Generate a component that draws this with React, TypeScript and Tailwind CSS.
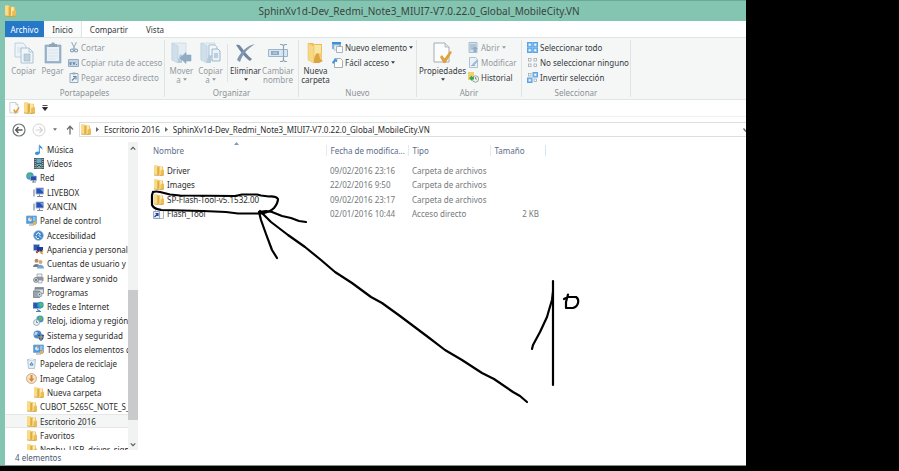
import type { ReactNode } from "react";

type TreeEntry = { name: string; icon: ReactNode; level: 1 | 2; selected?: boolean };

type FileEntry = { name: string; date: string; kind: string; size: string; shortcut?: boolean };

const folderTitle = "SphinXv1d-Dev_Redmi_Note3_MIUI7-V7.0.22.0_Global_MobileCity.VN";

function FolderIcon({ className = "h-[11px] w-[10px]" }: { className?: string }) {
  return (
    <svg viewBox="0 0 20 22" className={className} aria-hidden="true">
      <path d="M0 1h7l2 2h9v17H0z" fill="#efc765" />
      <path d="M0 1h6v19H0z" fill="#f9dc8a" />
      <path d="M10 4h6v15h-6z" fill="#fbe9b0" />
      <path d="M7 5l4-3v16l-4 3z" fill="#e2ab3d" />
      <path d="M13 11l7-2v11l-7 2z" fill="#edbd55" />
      <path d="M0 20l10 1.500 10-1.500" fill="none" stroke="#cf9a37" strokeWidth="1.500" />
    </svg>
  );
}

function BigFolderIcon() {
  return (
    <svg viewBox="0 0 18 22" className="h-[22px] w-[18px]" aria-hidden="true">
      <path d="M1 1h5l1 1h8v16H1z" fill="#eabf58" />
      <path d="M7 3h7v15H7z" fill="#fae5a2" />
      <path d="M1 1l6 3v17l-6-3z" fill="#f7d983" stroke="#e4b650" strokeWidth=".5" />
      <path d="M7 17c1-4 2-5 3-6l2 1c1 3 1 5 4 7l-4 2H7z" fill="#dca343" />
      <path d="M12 11h3v7l-2-1z" fill="#f2cc72" />
    </svg>
  );
}

function PaleFolderIcon({ copy }: { copy?: boolean }) {
  return (
    <svg viewBox="0 0 21 22" className="h-[22px] w-[21px]" aria-hidden="true">
      <path d="M1 1h14v17H1z" fill="#e4edf3" stroke="#c3d5e0" strokeWidth=".6" />
      <path d="M1 1l6 3v17l-6-3z" fill="#d0e0ea" stroke="#b8cddb" strokeWidth=".6" />
      <path d="M7 18l2-6 2 1v8H7z" fill="#b4cbdb" />
      {copy ? (
        <>
          <path d="M9 3h6l2 2v9H9z" fill="#f3f8fb" stroke="#a9c1d2" />
          <path d="M12 7h6l2 2v10h-8z" fill="#eaf2f7" stroke="#9cb7cb" />
          <path d="M14 11h4v5h-4z" fill="#b9cfdf" />
        </>
      ) : (
        <path d="M20 13v6h-5v2.500l-6-5.500 6-5.500V13z" fill="#91adc6" stroke="#829fb9" strokeWidth=".5" />
      )}
    </svg>
  );
}

function CopyIcon() {
  return (
    <svg viewBox="0 0 20 22" className="h-[22px] w-[20px]" aria-hidden="true">
      <path d="M1 1h8l3 3v11H1z" fill="#edf3f7" stroke="#b4c8d6" strokeWidth=".8" />
      <path d="M3 6h6M3 8h6M3 10h4" stroke="#c7d8e3" strokeWidth=".7" />
      <path d="M7 6h8l4 4v11H7z" fill="#f0f5f9" stroke="#a6bdce" strokeWidth=".9" />
      <path d="M15 6v4h4" fill="none" stroke="#a6bdce" strokeWidth=".8" />
      <path d="M10 12h6v7h-6z" fill="#bdd1df" stroke="#9ab3c7" strokeWidth=".6" />
    </svg>
  );
}

function PasteIcon() {
  return (
    <svg viewBox="0 0 18 22" className="h-[22px] w-[18px]" aria-hidden="true">
      <path d="M1 3h16v18H1z" fill="#9db7ce" stroke="#87a2bb" strokeWidth=".6" />
      <path d="M3 5h12v14H3z" fill="#e9f0f6" />
      <path d="M4 8h10M4 11h10M4 14h10M4 17h7" stroke="#d5e2ec" strokeWidth=".7" />
      <path d="M5 2h2l1-1.500h2L11 2h2v3H5z" fill="#8fa6ba" />
    </svg>
  );
}

function DeleteIcon() {
  return (
    <svg viewBox="0 0 21 20" className="h-[22px] w-[21px]" aria-hidden="true">
      <path d="M1 2c3-1 4 0 6 3 3 4 5 7 10 11l-2 2C9 14 6 9 1 2z" fill="#71869f" />
      <path d="M20 1C13 2 5 9 2 17l3 2C7 12 12 6 20 1z" fill="#8196b1" />
    </svg>
  );
}

function RenameIcon() {
  return (
    <svg viewBox="0 0 20 20" className="h-[22px] w-[20px]" aria-hidden="true">
      <path d="M.5 6.500h19v7H.5z" fill="#dbe7f0" stroke="#9db5ca" />
      <path d="M3 8h8v4H3z" fill="#8eabc6" />
      <path d="M5 10h4" stroke="#c9dae8" />
      <path d="M12 1.500h2l1.500 1 1.500-1h2M15.500 2v16M12 18.500h2l1.500-1 1.500 1h2" fill="none" stroke="#8ca5bc" strokeWidth="1.200" />
    </svg>
  );
}

function PropertiesIcon({ className = "h-[22px] w-[19px]" }: { className?: string }) {
  return (
    <svg viewBox="0 0 19 22" className={className} aria-hidden="true">
      <path d="M1 1h11l4 4v15H1z" fill="#fbfcfc" stroke="#a5acb1" />
      <path d="M12 1v4h4" fill="#e4e8ea" stroke="#a5acb1" strokeWidth=".8" />
      <path d="M7 15l2-2 2.500 3.500L17 9l2 1-6.500 11h-2z" fill="#e0a03c" />
    </svg>
  );
}

function ScissorsIcon() {
  return (
    <svg viewBox="0 0 10 11" className="h-[11px] w-[10px]" aria-hidden="true">
      <path d="M2.500 0l3.500 7M7.500 0L4 7" stroke="#9fb2c3" strokeWidth="1.100" />
      <circle cx="3" cy="8.500" r="1.500" fill="none" stroke="#7f9ab4" strokeWidth="1.100" />
      <circle cx="7" cy="8.500" r="1.500" fill="none" stroke="#7f9ab4" strokeWidth="1.100" />
    </svg>
  );
}

function PathIcon() {
  return (
    <svg viewBox="0 0 11 10" className="h-[10px] w-[11px]" aria-hidden="true">
      <path d="M.5 1.500h10v7H.5z" fill="#c3d5e3" stroke="#94adc3" />
      <path d="M2 4v2.500h1V4M5 4l1 2.500L7 4M8 6.500h1" fill="none" stroke="#5f7e9e" strokeWidth=".9" />
    </svg>
  );
}

function PasteLinkIcon() {
  return (
    <svg viewBox="0 0 10 11" className="h-[11px] w-[10px]" aria-hidden="true">
      <path d="M1 1.500h8v9H1z" fill="#eef3f7" stroke="#93a9bc" />
      <path d="M3.500.5h3v2h-3z" fill="#93a9bc" />
      <path d="M3 8.500l3-3M4 4.500h3v3" fill="none" stroke="#6484a2" strokeWidth="1.100" />
    </svg>
  );
}

function NewItemIcon() {
  return (
    <svg viewBox="0 0 11 11" className="h-[11px] w-[11px]" aria-hidden="true">
      <path d="M0 0h9v7H0z" fill="#7fb2dd" />
      <path d="M0 0h9v2H0z" fill="#3d8fd6" />
      <path d="M2 3h5v5H2z" fill="#e6f1fa" stroke="#9bb0c0" strokeWidth=".6" />
      <path d="M4.500 4.500h6v6h-6z" fill="#f8fafb" stroke="#96a5b0" strokeWidth=".8" />
    </svg>
  );
}

function EasyAccessIcon() {
  return (
    <svg viewBox="0 0 11 11" className="h-[11px] w-[11px]" aria-hidden="true">
      <path d="M2.500 1.500h6l2 2v7h-8z" fill="#fcfdfd" stroke="#a3adb4" />
      <path d="M0 5l3-3 2.500.5L5 5 3.500 4.500 1 7z" fill="#3c93d8" />
    </svg>
  );
}

function OpenIcon() {
  return (
    <svg viewBox="0 0 11 11" className="h-[11px] w-[11px]" aria-hidden="true">
      <path d="M1 .5h8v10H1z" fill="#d3e1ec" stroke="#9bb3c7" strokeWidth=".8" />
      <path d="M2 3h6M2 5h4M2 7h3" stroke="#88a5bf" strokeWidth=".9" />
      <path d="M7 4l3 3H8.500v3h-3V7H4z" fill="#8facc7" />
    </svg>
  );
}

function EditIcon() {
  return (
    <svg viewBox="0 0 11 11" className="h-[11px] w-[11px]" aria-hidden="true">
      <path d="M1.500.5h6l2 2v8h-8z" fill="#eaf2f8" stroke="#9fb5c8" strokeWidth=".8" />
      <path d="M4 9l.5-2L9 2.500l1.500 1.500L6 8.500z" fill="#9bbbd6" />
      <path d="M3 8.500h4" stroke="#89a6c1" strokeWidth=".8" />
    </svg>
  );
}

function HistoryIcon() {
  return (
    <svg viewBox="0 0 11 11" className="h-[11px] w-[11px]" aria-hidden="true">
      <path d="M0 0h6v8H0z" fill="#efd06b" />
      <circle cx="7.500" cy="7" r="3.200" fill="#eef2ee" stroke="#86928b" strokeWidth=".8" />
      <path d="M7.500 5v2h1.500" fill="none" stroke="#657069" strokeWidth=".7" />
      <path d="M1 6l3-2.500V5h2v2.500H4V9z" fill="#39a84c" />
    </svg>
  );
}

// one cell for each of the four tiles, true when the tile is picked
function TilesIcon({ tiles }: { tiles: boolean[] }) {
  return (
    <svg viewBox="0 0 11 11" className="h-[11px] w-[11px]" aria-hidden="true">
      {tiles.map((on, i) => {
        const x = (i % 2) * 5.5;
        const y = Math.floor(i / 2) * 5.5;
        return (
          <g key={i}>
            {on && <rect x={x} y={y} width="5.500" height="5.500" fill="#5aa5e8" />}
            <rect x={x + 1.5} y={y + 1.5} width="2.500" height="2.500" fill="#fff" stroke={on ? "#8cc2f0" : "#a3a9ad"} strokeWidth=".8" />
          </g>
        );
      })}
    </svg>
  );
}

function MusicIcon() {
  return (
    <svg viewBox="0 0 10 11" className="h-[11px] w-[10px]" aria-hidden="true">
      <path d="M5 0c.5 2 4 2.500 3.500 6-.5-1.500-1.500-2-2.500-2v4.500C6 10 4.500 11 3 11S.8 10 1 9s2-2 4-1.300z" fill="#3b92d8" />
      <path d="M5 1v6.500" stroke="#8fc6ef" strokeWidth=".8" />
    </svg>
  );
}

function VideoIcon() {
  return (
    <svg viewBox="0 0 10 11" className="h-[11px] w-[10px]" aria-hidden="true">
      <path d="M0 0h10v11H0z" fill="#46565f" />
      <path d="M2.500.5h5v4.500h-5z" fill="#69a8c7" />
      <path d="M2.500 6h5v4.500h-5z" fill="#7fb3a3" />
      <path d="M1.200 1v9.500M8.800 1v9.500" stroke="#c5d0d6" strokeDasharray="1 1" />
      <path d="M3 9l2-2 2 2" fill="none" stroke="#304a66" />
    </svg>
  );
}

function NetworkIcon() {
  return (
    <svg viewBox="0 0 11 11" className="h-[11px] w-[11px]" aria-hidden="true">
      <circle cx="4" cy="4" r="3.800" fill="#3f9ed5" />
      <path d="M1 3l2-2 2 1-1 2-2 2z" fill="#58b956" />
      <path d="M4.500 4h6v4.500h-6z" fill="#244fae" stroke="#a9b7c8" strokeWidth=".7" />
      <path d="M6 10h4M7.500 8.500V10" stroke="#6f7d8c" />
    </svg>
  );
}

function ComputerIcon() {
  return (
    <svg viewBox="0 0 11 11" className="h-[11px] w-[11px]" aria-hidden="true">
      <path d="M0 2.500h2v7H0z" fill="#b0b9c3" />
      <path d="M3 1h7.500v6H3z" fill="#2451bd" stroke="#aab4c2" strokeWidth=".9" />
      <path d="M7 2l3 0v3z" fill="#6f9fe4" />
      <path d="M6.500 7.500V9M4 9.500h6" stroke="#7b8793" />
    </svg>
  );
}

function ControlPanelIcon() {
  return (
    <svg viewBox="0 0 11 11" className="h-[11px] w-[11px]" aria-hidden="true">
      <path d="M.5 1h10v7.500H.5z" fill="#4c9ade" stroke="#7da8ca" strokeWidth=".8" />
      <circle cx="4" cy="4.500" r="2" fill="#d5e9f8" />
      <path d="M4 4.500V2.500a2 2 0 012 2z" fill="#f08c3c" />
      <path d="M7 3h2.500M7 5h2.500" stroke="#fff" strokeWidth=".8" />
      <path d="M3 10h5" stroke="#8997a5" />
      <path d="M7 7l3-1v4H7z" fill="#e5b253" />
    </svg>
  );
}

function AccessIcon() {
  return (
    <svg viewBox="0 0 11 11" className="h-[11px] w-[11px]" aria-hidden="true">
      <circle cx="5.500" cy="5.500" r="4.800" fill="#3b83cd" stroke="#8eb0d2" strokeWidth=".8" />
      <path d="M3 5l2-2.500L7.500 4 6 5.500l2 2M3 6a2.200 2.200 0 003 2.500" fill="none" stroke="#fff" />
    </svg>
  );
}

function AppearanceIcon() {
  return (
    <svg viewBox="0 0 11 11" className="h-[11px] w-[11px]" aria-hidden="true">
      <path d="M.5.5h6v6h-6z" fill="#2858b8" stroke="#b8c2ce" strokeWidth=".6" />
      <path d="M4 3h6v5H4z" fill="#1d3a94" />
      <path d="M6 7l4 3M8 10l2-4" stroke="#d8a748" strokeWidth="1.300" />
      <circle cx="4" cy="8" r="1.300" fill="#cf4b42" />
    </svg>
  );
}

function UsersIcon() {
  return (
    <svg viewBox="0 0 11 11" className="h-[11px] w-[11px]" aria-hidden="true">
      <circle cx="3.500" cy="2.800" r="2" fill="#b98c62" />
      <path d="M0 9c0-4 7-4 7 0z" fill="#717d87" />
      <circle cx="7.500" cy="4" r="2" fill="#d7a877" />
      <path d="M4 10.500c0-5 7-5 7 0z" fill="#6fa8d3" />
    </svg>
  );
}

function PrinterIcon() {
  return (
    <svg viewBox="0 0 11 11" className="h-[11px] w-[11px]" aria-hidden="true">
      <path d="M4 1h5v3H4z" fill="#f0f2f4" stroke="#8c959d" strokeWidth=".7" />
      <path d="M2.500 4H10.500v4h-8z" fill="#8e979f" />
      <circle cx="3" cy="7" r="2.500" fill="#c5cbd0" stroke="#6e7880" strokeWidth=".7" />
      <circle cx="3" cy="7" r=".9" fill="#59636b" />
      <path d="M5.500 7H9v3H5.500z" fill="#edf0f2" stroke="#8c959d" strokeWidth=".6" />
    </svg>
  );
}

function ProgramsIcon() {
  return (
    <svg viewBox="0 0 11 11" className="h-[11px] w-[11px]" aria-hidden="true">
      <path d="M2 .5h8.500v6H2z" fill="#dce1e5" stroke="#7e8992" strokeWidth=".8" />
      <path d="M2 .5h8.500v2H2z" fill="#7e8992" />
      <path d="M.5 4h6v6.500h-6z" fill="#9ba5ad" stroke="#68737c" strokeWidth=".7" />
      <circle cx="6.500" cy="7.500" r="2.500" fill="#c9cfd4" stroke="#77828a" strokeWidth=".6" />
      <circle cx="6.500" cy="7.500" r=".7" fill="#4d6887" />
    </svg>
  );
}

function InternetIcon() {
  return (
    <svg viewBox="0 0 11 11" className="h-[11px] w-[11px]" aria-hidden="true">
      <path d="M0 1.500h8v6H0z" fill="#2559b8" stroke="#a5b4c5" strokeWidth=".6" />
      <circle cx="7.500" cy="4" r="3.200" fill="#349bc7" />
      <path d="M6 3l2-1.500L10 4 8 6z" fill="#61bd5b" />
      <path d="M4 8.500l3 1.500M3 10.500h5" stroke="#3f8aa4" strokeWidth="1.200" />
    </svg>
  );
}

function ClockIcon() {
  return (
    <svg viewBox="0 0 11 11" className="h-[11px] w-[11px]" aria-hidden="true">
      <circle cx="7" cy="4" r="3.600" fill="#3f94cf" />
      <path d="M5 3l2-2 3 2-2 3z" fill="#60b85c" />
      <circle cx="3.500" cy="7.500" r="3" fill="#eaf0f4" stroke="#8699a8" strokeWidth=".8" />
      <path d="M3.500 5.500v2H5" fill="none" stroke="#51616d" strokeWidth=".7" />
    </svg>
  );
}

function SecurityIcon() {
  return (
    <svg viewBox="0 0 11 11" className="h-[11px] w-[11px]" aria-hidden="true">
      <circle cx="4.500" cy="4.500" r="4" fill="#4c88c6" />
      <path d="M2 1.500l3 1-1 2-3 1z" fill="#b7d6ed" />
      <path d="M5 5l3-1 3 1c0 3-1 5-3 6-2-1-3-3-3-6z" fill="#1e58b0" />
      <path d="M8 4v6.500M5 7h6" stroke="#e9ba4b" strokeWidth=".8" />
    </svg>
  );
}

function RecycleIcon() {
  return (
    <svg viewBox="0 0 11 11" className="h-[11px] w-[11px]" aria-hidden="true">
      <path d="M1.500 1.500h8l-1 9h-6z" fill="#e3edf3" stroke="#a7bac6" strokeWidth=".8" />
      <path d="M3.500 1h4l1 1.500h-6z" fill="#fff" stroke="#b7c4cc" strokeWidth=".5" />
      <path d="M4 7l1.500-2.500L7 7z" fill="none" stroke="#3e86c7" />
    </svg>
  );
}

function CatalogIcon() {
  return (
    <svg viewBox="0 0 11 11" className="h-[11px] w-[11px]" aria-hidden="true">
      <circle cx="5.500" cy="5.500" r="4.900" fill="#f7e7d1" stroke="#c99b66" strokeWidth=".9" />
      <path d="M4.500 2h2v3.500h2l-3 3.500-3-3.500h2z" fill="#d48b3c" />
    </svg>
  );
}

function ShortcutIcon() {
  return (
    <svg viewBox="0 0 11 11" className="h-[11px] w-[11px]" aria-hidden="true">
      <path d="M2.500.5h5l3 2.500v7.500h-8z" fill="#f7f8fa" stroke="#99a3ad" strokeWidth=".8" />
      <path d="M.5 3.500h6v7h-6z" fill="#e5ecf7" stroke="#8494ab" strokeWidth=".8" />
      <path d="M1.500 9l3-3M2.500 5.500H5V8" fill="none" stroke="#2444a5" strokeWidth="1.200" />
    </svg>
  );
}

const tree: TreeEntry[] = [
  { name: "Música", icon: <MusicIcon />, level: 2 },
  { name: "Vídeos", icon: <VideoIcon />, level: 2 },
  { name: "Red", icon: <NetworkIcon />, level: 1 },
  { name: "LIVEBOX", icon: <ComputerIcon />, level: 2 },
  { name: "XANCIN", icon: <ComputerIcon />, level: 2 },
  { name: "Panel de control", icon: <ControlPanelIcon />, level: 1 },
  { name: "Accesibilidad", icon: <AccessIcon />, level: 2 },
  { name: "Apariencia y personaliz", icon: <AppearanceIcon />, level: 2 },
  { name: "Cuentas de usuario y p", icon: <UsersIcon />, level: 2 },
  { name: "Hardware y sonido", icon: <PrinterIcon />, level: 2 },
  { name: "Programas", icon: <ProgramsIcon />, level: 2 },
  { name: "Redes e Internet", icon: <InternetIcon />, level: 2 },
  { name: "Reloj, idioma y región", icon: <ClockIcon />, level: 2 },
  { name: "Sistema y seguridad", icon: <SecurityIcon />, level: 2 },
  { name: "Todos los elementos d", icon: <ControlPanelIcon />, level: 2 },
  { name: "Papelera de reciclaje", icon: <RecycleIcon />, level: 1 },
  { name: "Image Catalog", icon: <CatalogIcon />, level: 1 },
  { name: "Nueva carpeta", icon: <FolderIcon />, level: 2 },
  { name: "CUBOT_5265C_NOTE_S_", icon: <FolderIcon />, level: 1 },
  { name: "Escritorio 2016", icon: <FolderIcon />, level: 1, selected: true },
  { name: "Favoritos", icon: <FolderIcon />, level: 1 },
  { name: "Nenhu_USB_driver_signe", icon: <FolderIcon />, level: 1 },
];

const files: FileEntry[] = [
  { name: "Driver", date: "09/02/2016 23:16", kind: "Carpeta de archivos", size: "" },
  { name: "Images", date: "22/02/2016 9:50", kind: "Carpeta de archivos", size: "" },
  { name: "SP-Flash-Tool-v5.1532.00", date: "09/02/2016 23:17", kind: "Carpeta de archivos", size: "" },
  { name: "Flash_Tool", date: "02/01/2016 10:44", kind: "Acceso directo", size: "2 KB", shortcut: true },
];

function Caret() {
  return (
    <svg viewBox="0 0 5 3" className="h-[3px] w-[4px]" aria-hidden="true">
      <path d="M0 0h5L2.500 3z" fill="currentColor" />
    </svg>
  );
}

function RibbonGroup({ label, className, children }: { label: string; className: string; children: ReactNode }) {
  return (
    <section className={`flex shrink-0 flex-col py-[2px] ${className}`}>
      <div className="flex flex-1 flex-col border-r border-[#dfe3e3]">
        <div className="flex flex-1">{children}</div>
        <h2 className="h-[9px] text-center leading-[9px] text-[#8d9193]">{label}</h2>
      </div>
    </section>
  );
}

function BigButton({ icon, lines, className, caret, disabled }: { icon: ReactNode; lines: string[]; className: string; caret?: "below" | "inline"; disabled?: boolean }) {
  return (
    <button type="button" disabled={disabled} className={`flex shrink-0 flex-col items-center pt-[2px] leading-[9px] whitespace-nowrap ${disabled ? "text-[#93999d]" : "text-[#35393d]"} ${className}`}>
      {icon}
      <span className="mt-[2px]">{lines[0]}</span>
      {lines[1] && (
        <span className="flex items-center gap-[2px]">
          {lines[1]}
          {caret === "inline" && <Caret />}
        </span>
      )}
      {caret === "below" && (
        <span className="pt-[3px]">
          <Caret />
        </span>
      )}
    </button>
  );
}

function SmallButton({ icon, label, caret, disabled }: { icon: ReactNode; label: string; caret?: boolean; disabled?: boolean }) {
  return (
    <button type="button" disabled={disabled} className={`flex h-[15px] items-center gap-[2px] whitespace-nowrap ${disabled ? "text-[#93999d]" : "text-[#35393d]"}`}>
      <span className="flex w-[11px] justify-center">{icon}</span>
      {label}
      {caret && <Caret />}
    </button>
  );
}

function Ribbon() {
  return (
    <div className="flex h-[63px] shrink-0 overflow-hidden border-y border-[#dfe4e4] bg-[#f5f7f7]">
      <RibbonGroup label="Portapapeles" className="w-[160px]">
        <BigButton icon={<CopyIcon />} lines={["Copiar"]} className="ml-[4px] w-[29px]" disabled />
        <BigButton icon={<PasteIcon />} lines={["Pegar"]} className="w-[29px]" disabled />
        <div className="pl-[1px]">
          <SmallButton icon={<ScissorsIcon />} label="Cortar" disabled />
          <SmallButton icon={<PathIcon />} label="Copiar ruta de acceso" disabled />
          <SmallButton icon={<PasteLinkIcon />} label="Pegar acceso directo" disabled />
        </div>
      </RibbonGroup>
      <RibbonGroup label="Organizar" className="w-[134px]">
        <BigButton icon={<PaleFolderIcon />} lines={["Mover", "a"]} className="ml-[2px] w-[29px]" caret="inline" disabled />
        <BigButton icon={<PaleFolderIcon copy />} lines={["Copiar", "a"]} className="w-[29px]" caret="inline" disabled />
        <div className="mt-[4px] ml-[2px] h-[38px] border-l border-[#dfe3e3]" />
        <BigButton icon={<DeleteIcon />} lines={["Eliminar"]} className="w-[35px]" caret="below" />
        <BigButton icon={<RenameIcon />} lines={["Cambiar", "nombre"]} className="w-[30px]" disabled />
      </RibbonGroup>
      <RibbonGroup label="Nuevo" className="w-[118px]">
        <BigButton icon={<BigFolderIcon />} lines={["Nueva", "carpeta"]} className="w-[33px]" />
        <div>
          <SmallButton icon={<NewItemIcon />} label="Nuevo elemento" caret />
          <SmallButton icon={<EasyAccessIcon />} label="Fácil acceso" caret />
        </div>
      </RibbonGroup>
      <RibbonGroup label="Abrir" className="w-[105px]">
        <BigButton icon={<PropertiesIcon />} lines={["Propiedades"]} className="w-[51px]" caret="below" />
        <div>
          <SmallButton icon={<OpenIcon />} label="Abrir" caret disabled />
          <SmallButton icon={<EditIcon />} label="Modificar" disabled />
          <SmallButton icon={<HistoryIcon />} label="Historial" />
        </div>
      </RibbonGroup>
      <RibbonGroup label="Seleccionar" className="w-[109px]">
        <div className="pl-[5px]">
          <SmallButton icon={<TilesIcon tiles={[true, true, true, true]} />} label="Seleccionar todo" />
          <SmallButton icon={<TilesIcon tiles={[false, false, false, false]} />} label="No seleccionar ninguno" />
          <SmallButton icon={<TilesIcon tiles={[false, true, true, false]} />} label="Invertir selección" />
        </div>
      </RibbonGroup>
    </div>
  );
}

function AddressBar() {
  return (
    <div className="flex h-[25px] shrink-0 items-center pl-[7px] text-[#2b2b2b]">
      <button type="button" aria-label="Atrás">
        <svg viewBox="0 0 14 14" className="h-[14px] w-[14px]">
          <circle cx="7" cy="7" r="6" fill="#fff" stroke="#73777a" strokeWidth="1.200" />
          <path d="M10.500 7H4M6.500 4L3.700 7l2.800 3" fill="none" stroke="#55595c" strokeWidth="1.400" />
        </svg>
      </button>
      <button type="button" aria-label="Adelante" className="ml-[6px]" disabled>
        <svg viewBox="0 0 14 14" className="h-[14px] w-[14px]">
          <circle cx="7" cy="7" r="6" fill="#fff" stroke="#d2d4d5" />
          <path d="M3.500 7H10M7.500 4l2.800 3-2.800 3" fill="none" stroke="#d2d4d5" strokeWidth="1.200" />
        </svg>
      </button>
      <button type="button" aria-label="Ubicaciones recientes" className="ml-[7px] text-[#6b6e70]">
        <Caret />
      </button>
      <button type="button" aria-label="Subir" className="ml-[9px]">
        <svg viewBox="0 0 8 10" className="h-[10px] w-[8px]">
          <path d="M4 9.500V1.500M1 4.500l3-3.200 3 3.200" fill="none" stroke="#6b6e70" strokeWidth="1.300" />
        </svg>
      </button>
      <nav aria-label="Ruta" className="ml-[5px] flex h-[15px] min-w-0 flex-1 items-center border border-r-0 border-[#dcdfdf]">
        <span className="ml-[1px]">
          <FolderIcon />
        </span>
        <Chevron />
        <button type="button" className="shrink-0">Escritorio 2016</button>
        <Chevron />
        <button type="button" className="min-w-0 truncate">{folderTitle}</button>
        <svg viewBox="0 0 5 4" className="ml-auto h-[4px] w-[3px]" preserveAspectRatio="xMinYMid slice" aria-hidden="true">
          <path d="M.5.5L3 3.500" stroke="#55595c" strokeWidth="1.200" />
        </svg>
      </nav>
    </div>
  );
}

function Chevron() {
  return (
    <svg viewBox="0 0 3 5" className="mx-[5px] h-[5px] w-[3px] shrink-0" aria-hidden="true">
      <path d="M0 0l3 2.500L0 5z" fill="#66696b" />
    </svg>
  );
}

function Sidebar() {
  return (
    <aside className="flex w-[133px] shrink-0">
      <ul className="grid h-[315px] min-w-0 flex-1 auto-rows-fr">
        {tree.map((entry) => (
          <li key={entry.name} className={`min-h-0 overflow-hidden ${entry.selected ? "border-y border-[#e6e8e8] bg-[#f4f6f6]" : ""}`}>
            <button type="button" className={`flex h-full w-full items-center gap-[3px] whitespace-nowrap text-[#2b2b2b] ${entry.level === 1 ? "pl-[21px]" : "pl-[28px]"}`}>
              <span className="flex w-[11px] shrink-0 justify-center">{entry.icon}</span>
              {entry.name}
            </button>
          </li>
        ))}
      </ul>
      <div className="flex h-[308px] w-[10px] shrink-0 flex-col items-center bg-[#f1f2f2]">
        <ScrollArrow label="Subir lista" path="M1 4l3-3 3 3" />
        <div className="mt-[136px] h-[130px] w-full bg-[#c9cacb]" />
        <div className="mt-auto">
          <ScrollArrow label="Bajar lista" path="M1 1l3 3 3-3" />
        </div>
      </div>
    </aside>
  );
}

function ScrollArrow({ label, path }: { label: string; path: string }) {
  return (
    <button type="button" aria-label={label} className="flex h-[12px] items-center">
      <svg viewBox="0 0 8 5" className="h-[5px] w-[6px]">
        <path d={path} fill="none" stroke="#55595c" strokeWidth="1.600" />
      </svg>
    </button>
  );
}

function FileList() {
  return (
    <div className="min-w-0 flex-1 pl-[1px]">
      <div className="flex h-[3px] pl-[95px]">
        <svg viewBox="0 0 5 3" className="h-[3px] w-[5px]" aria-hidden="true">
          <path d="M0 3h5L2.500 0z" fill="#7e9cb8" />
        </svg>
      </div>
      <table className="w-[406px] table-fixed border-collapse whitespace-nowrap text-[#75797c]">
        <colgroup>
          <col className="w-[187px]" />
          <col className="w-[82px]" />
          <col className="w-[82px]" />
          <col className="w-[55px]" />
        </colgroup>
        <thead>
          <tr className="h-[11px] text-left text-[#5c6c88]">
            <th className="border-r border-[#e4ebf0] p-0 pl-[14px] font-normal">Nombre</th>
            <th className="border-r border-[#e4ebf0] p-0 pl-[4px] font-normal">Fecha de modifica...</th>
            <th className="border-r border-[#e4ebf0] p-0 pl-[4px] font-normal">Tipo</th>
            <th className="border-r border-[#cfe6f5] p-0 pl-[4px] font-normal">Tamaño</th>
          </tr>
        </thead>
        <tbody>
          <tr className="h-[7px]" aria-hidden="true" />
          {files.map((file) => (
            <tr key={file.name} className="h-[14px] odd:h-[15px]">
              <td className="p-0 pl-[14px] text-[#2b2b2b]">
                <button type="button" className="flex h-[14px] items-center gap-[3px]">
                  <span className="flex w-[11px] justify-center">{file.shortcut ? <ShortcutIcon /> : <FolderIcon />}</span>
                  {file.name}
                </button>
              </td>
              <td className="p-0 pl-[4px]">{file.date}</td>
              <td className="p-0 pl-[4px]">{file.kind}</td>
              <td className="p-0 pr-[6px] text-right">{file.size}</td>
            </tr>
          ))}
        </tbody>
      </table>
    </div>
  );
}

// freehand pen strokes drawn on top of the window
function PenMarks() {
  return (
    <svg viewBox="0 0 899 471" className="pointer-events-none absolute top-0 left-0 h-[471px] w-[899px]" fill="none" stroke="#000" strokeWidth="2.200" strokeLinecap="round" strokeLinejoin="round" aria-hidden="true">
      <path d="M153 192L152 195V205Q154 209 161 210L203 211L226 212L238 213.500H262Q270 212 274 208Q278 203 278 199Q276 196 269 196.500L261 195.500L257 194.500H242L235 196L180 195.500L170 194.500L160 192Q156 191 153 192" />
      <path d="M259 212L266 211L272 212L282 216L291 218L299 221L306 222" />
      <path d="M259 212L261 220L266 234L272 250L277 258" />
      <path d="M260 211L271 222L288 235L305 247L321 260L335 272L352 283L371 297L382 303L400 316L428 337L445 350L462 360L482 373L494 379L513 392L520 396L527 402" />
      <path d="M553 281V385" />
      <path d="M553 292L552 300L549 310L547 317L540 332L533 345L532 349" />
      <path d="M564 299L568 297H576Q579 299 578 303Q577 307 573 308H566V302L568 294.500" />
    </svg>
  );
}

export default function App() {
  return (
    <div className="relative h-screen overflow-hidden bg-black pb-[5px] font-['Noto_Sans','Open_Sans',sans-serif] text-[8px] leading-[11px]">
      <main className="flex h-full w-[83%] flex-col border-b border-[#83908c] bg-[#84c5b1]">
        <header className="flex h-[21px] shrink-0 items-center border-t border-[#6ba896] pl-[5px]">
          <FolderIcon className="h-[12px] w-[11px]" />
          <h1 className="min-w-0 flex-1 truncate pl-[76px] text-center text-[10px] leading-[14px] text-[#39443f]">{folderTitle}</h1>
        </header>
        <div className="ml-[5px] flex min-h-0 flex-1 flex-col bg-white">
          <nav className="flex h-[16px] shrink-0 items-stretch text-[#35393d]" aria-label="Cinta">
            <button type="button" className="w-[39px] bg-[#2577c8] text-white">Archivo</button>
            <button type="button" className="w-[38px] border-r border-[#dfe4e4] bg-[#f9fafa]">Inicio</button>
            <button type="button" className="w-[54px]">Compartir</button>
            <button type="button" className="w-[38px]">Vista</button>
          </nav>
          <Ribbon />
          <div className="flex h-[17px] shrink-0 items-center gap-[4px] border-b border-[#f0f1f1] pl-[4px]">
            <button type="button" aria-label="Propiedades">
              <PropertiesIcon className="h-[12px] w-[11px]" />
            </button>
            <button type="button" aria-label="Nueva carpeta">
              <FolderIcon className="h-[12px] w-[11px]" />
            </button>
            <button type="button" aria-label="Personalizar barra" className="ml-[3px]">
              <svg viewBox="0 0 6 6" className="h-[6px] w-[6px]">
                <path d="M.5.5h5M.5 2.500h5L3 5.500z" fill="#222" stroke="#222" strokeWidth=".8" />
              </svg>
            </button>
          </div>
          <AddressBar />
          <div className="flex min-h-0 flex-1 overflow-hidden">
            <Sidebar />
            <FileList />
          </div>
          <footer className="h-[15px] shrink-0 bg-white pl-[10px] leading-[15px] text-[#4a5a74]">4 elementos</footer>
        </div>
      </main>
      <PenMarks />
    </div>
  );
}
